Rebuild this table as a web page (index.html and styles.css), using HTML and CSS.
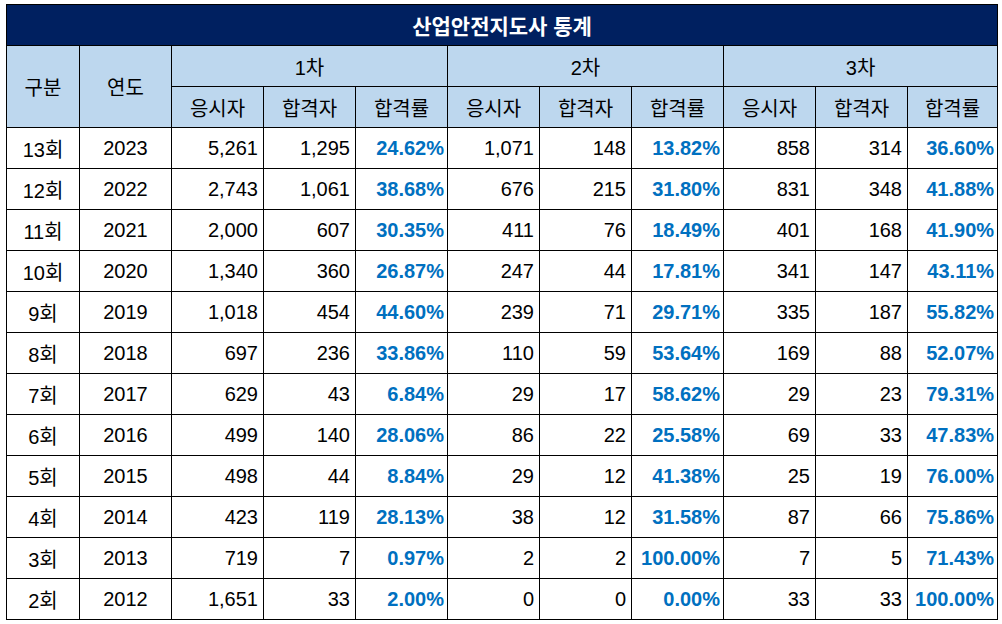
FILE: index.html
```html
<!DOCTYPE html>
<html lang="ko">
<head>
<meta charset="utf-8">
<title>산업안전지도사 통계</title>
<link rel="stylesheet" href="styles.css">
</head>
<body>
<table class="stats">
  <colgroup>
    <col class="c-first">
    <col class="c"><col class="c"><col class="c"><col class="c"><col class="c">
    <col class="c"><col class="c"><col class="c"><col class="c"><col class="c-last">
  </colgroup>
  <thead>
    <tr class="title-row"><th colspan="11" class="title">산업안전지도사 통계</th></tr>
    <tr class="hrow">
      <th rowspan="2">구분</th>
      <th rowspan="2">연도</th>
      <th colspan="3">1차</th>
      <th colspan="3">2차</th>
      <th colspan="3">3차</th>
    </tr>
    <tr class="hrow">
      <th>응시자</th><th>합격자</th><th>합격률</th>
      <th>응시자</th><th>합격자</th><th>합격률</th>
      <th>응시자</th><th>합격자</th><th>합격률</th>
    </tr>
  </thead>
  <tbody>
    <tr><td class="ctr">13회</td><td class="ctr">2023</td><td class="num">5,261</td><td class="num">1,295</td><td class="pct">24.62%</td><td class="num">1,071</td><td class="num">148</td><td class="pct">13.82%</td><td class="num">858</td><td class="num">314</td><td class="pct">36.60%</td></tr>
    <tr><td class="ctr">12회</td><td class="ctr">2022</td><td class="num">2,743</td><td class="num">1,061</td><td class="pct">38.68%</td><td class="num">676</td><td class="num">215</td><td class="pct">31.80%</td><td class="num">831</td><td class="num">348</td><td class="pct">41.88%</td></tr>
    <tr><td class="ctr">11회</td><td class="ctr">2021</td><td class="num">2,000</td><td class="num">607</td><td class="pct">30.35%</td><td class="num">411</td><td class="num">76</td><td class="pct">18.49%</td><td class="num">401</td><td class="num">168</td><td class="pct">41.90%</td></tr>
    <tr><td class="ctr">10회</td><td class="ctr">2020</td><td class="num">1,340</td><td class="num">360</td><td class="pct">26.87%</td><td class="num">247</td><td class="num">44</td><td class="pct">17.81%</td><td class="num">341</td><td class="num">147</td><td class="pct">43.11%</td></tr>
    <tr><td class="ctr">9회</td><td class="ctr">2019</td><td class="num">1,018</td><td class="num">454</td><td class="pct">44.60%</td><td class="num">239</td><td class="num">71</td><td class="pct">29.71%</td><td class="num">335</td><td class="num">187</td><td class="pct">55.82%</td></tr>
    <tr><td class="ctr">8회</td><td class="ctr">2018</td><td class="num">697</td><td class="num">236</td><td class="pct">33.86%</td><td class="num">110</td><td class="num">59</td><td class="pct">53.64%</td><td class="num">169</td><td class="num">88</td><td class="pct">52.07%</td></tr>
    <tr><td class="ctr">7회</td><td class="ctr">2017</td><td class="num">629</td><td class="num">43</td><td class="pct">6.84%</td><td class="num">29</td><td class="num">17</td><td class="pct">58.62%</td><td class="num">29</td><td class="num">23</td><td class="pct">79.31%</td></tr>
    <tr><td class="ctr">6회</td><td class="ctr">2016</td><td class="num">499</td><td class="num">140</td><td class="pct">28.06%</td><td class="num">86</td><td class="num">22</td><td class="pct">25.58%</td><td class="num">69</td><td class="num">33</td><td class="pct">47.83%</td></tr>
    <tr><td class="ctr">5회</td><td class="ctr">2015</td><td class="num">498</td><td class="num">44</td><td class="pct">8.84%</td><td class="num">29</td><td class="num">12</td><td class="pct">41.38%</td><td class="num">25</td><td class="num">19</td><td class="pct">76.00%</td></tr>
    <tr><td class="ctr">4회</td><td class="ctr">2014</td><td class="num">423</td><td class="num">119</td><td class="pct">28.13%</td><td class="num">38</td><td class="num">12</td><td class="pct">31.58%</td><td class="num">87</td><td class="num">66</td><td class="pct">75.86%</td></tr>
    <tr><td class="ctr">3회</td><td class="ctr">2013</td><td class="num">719</td><td class="num">7</td><td class="pct">0.97%</td><td class="num">2</td><td class="num">2</td><td class="pct">100.00%</td><td class="num">7</td><td class="num">5</td><td class="pct">71.43%</td></tr>
    <tr><td class="ctr">2회</td><td class="ctr">2012</td><td class="num">1,651</td><td class="num">33</td><td class="pct">2.00%</td><td class="num">0</td><td class="num">0</td><td class="pct">0.00%</td><td class="num">33</td><td class="num">33</td><td class="pct">100.00%</td></tr>
  </tbody>
</table>
</body>
</html>
```

FILE: styles.css
```css
html, body {
  margin: 0;
  padding: 0;
  background: #ffffff;
}

body {
  padding: 4px 0 0 6px;
  font-family: "Liberation Sans", "Noto Sans CJK KR", sans-serif;
  color: #000000;
}

.stats {
  border-collapse: collapse;
  table-layout: fixed;
  width: 992px;
  font-size: 20px;
}

.c-first { width: 73px; }
.c { width: 92px; }
.c-last { width: 90px; }

.stats th,
.stats td {
  border: 1px solid #000000;
  height: 40px;
  padding: 0;
  vertical-align: middle;
  white-space: nowrap;
  overflow: hidden;
}

.title-row .title {
  background: #002060;
  color: #ffffff;
  font-weight: bold;
  font-size: 21px;
  text-align: center;
}

.hrow th {
  background: #bdd7ee;
  font-weight: normal;
  text-align: center;
  font-size: 20px;
}

.ctr {
  text-align: center;
}

.num {
  text-align: right;
  padding-right: 5px !important;
}

.pct {
  text-align: right;
  padding-right: 3px !important;
  color: #0070c0;
  font-weight: bold;
}
```
